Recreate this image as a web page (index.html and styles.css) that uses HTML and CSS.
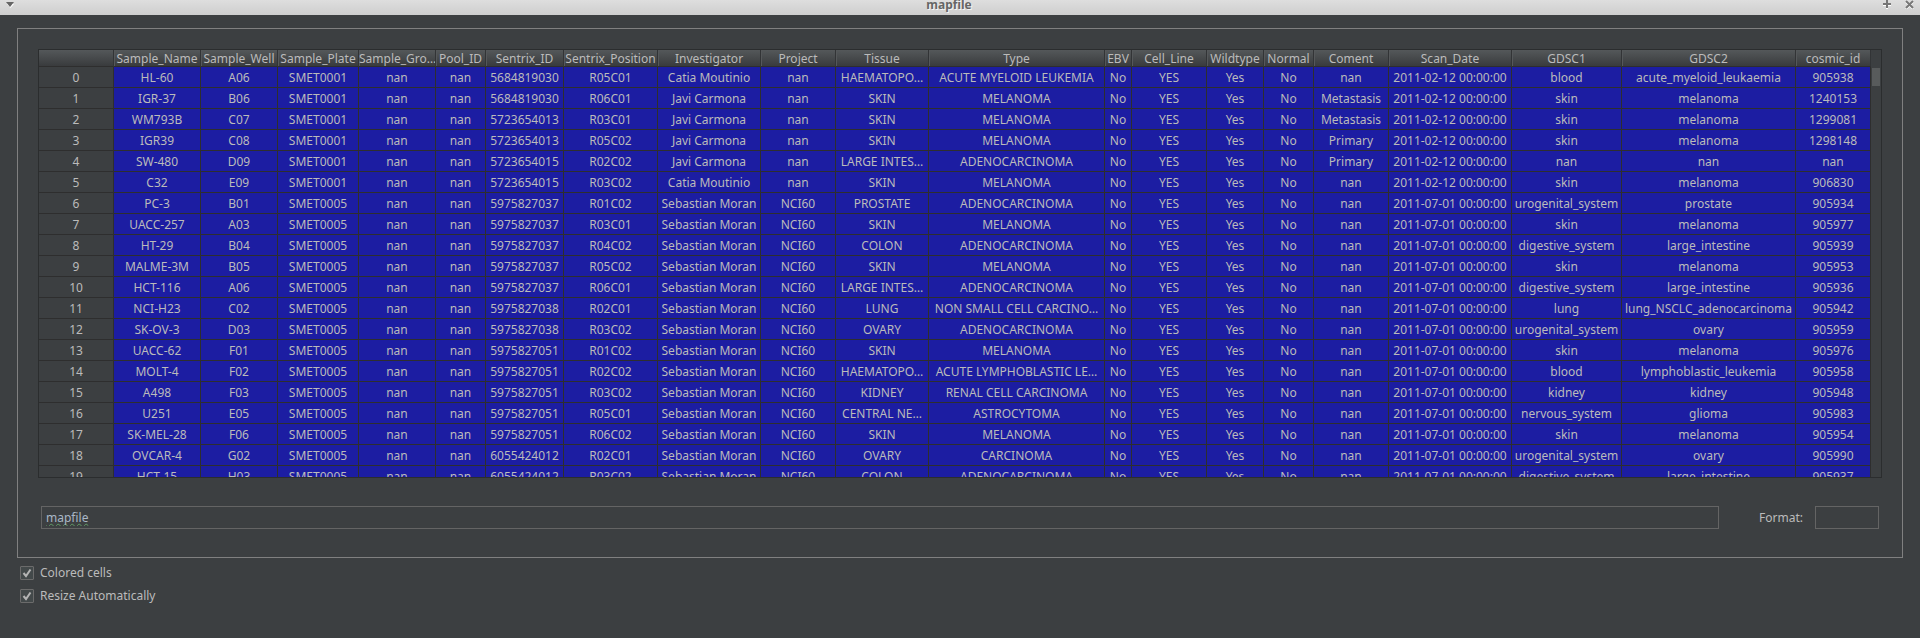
FILE: index.html
```html
<!DOCTYPE html>
<html lang="en">
<head>
<meta charset="utf-8">
<title>mapfile</title>
<link rel="stylesheet" href="styles.css">
</head>
<body>
<header class="titlebar">
  <button class="title-button" type="button" aria-label="Window menu">
    <svg width="8" height="6" viewBox="0 0 8 6"><path d="M1 2h7L4.500 6z" fill="#fff"/><path d="M0 0h8L4 5z" fill="#666"/></svg>
  </button>
  <h1 class="title">mapfile</h1>
  <div class="title-actions">
    <button class="title-button" type="button" aria-label="Maximize">
      <svg width="8" height="9" viewBox="0 0 8 9"><path d="M0 5h8M4 1v8" stroke="#fff" stroke-width="2"/><path d="M0 4h8M4 0v8" stroke="#777" stroke-width="2"/></svg>
    </button>
    <button class="title-button" type="button" aria-label="Close">
      <svg width="9" height="9" viewBox="0 0 9 9"><path d="M1 2l7 7M8 2l-7 7" stroke="#fff" stroke-width="2"/><path d="M1 1l7 7M8 1l-7 7" stroke="#777" stroke-width="2"/></svg>
    </button>
  </div>
</header>

<main class="content">
  <section class="panel">
    <div class="grid-view">
      <div class="grid-rows">
        <table class="grid">
          <colgroup id="columns"></colgroup>
          <thead><tr id="headings"></tr></thead>
          <tbody id="rows"></tbody>
        </table>
      </div>
      <div class="scrollbar"><div class="thumb"></div></div>
    </div>
    <div class="fields">
      <input class="field expression" type="text" value="mapfile" aria-label="Expression">
      <label class="format-label" for="format">Format:</label>
      <input class="field format" id="format" type="text">
    </div>
  </section>
  <div class="options">
    <label class="option"><input class="check" type="checkbox" checked>Colored cells</label>
    <label class="option"><input class="check" type="checkbox" checked>Resize Automatically</label>
  </div>
</main>
<script src="script.js"></script>
</body>
</html>
```

FILE: styles.css
```css
* {
  box-sizing: border-box;
}

body {
  margin: 0;
  min-height: 100vh;
  display: flex;
  flex-direction: column;
  background: #3c3f41;
  color: #bbbbbb;
  font: 12px/16px "Noto Sans", "Open Sans", sans-serif;
}

.titlebar {
  display: grid;
  grid-template-columns: 1fr auto 1fr;
  align-items: start;
  height: 15px;
  padding: 0 6px;
  background: linear-gradient(#dedede, #cecece);
}

.title {
  margin: 0;
  padding-right: 22px;
  font-size: 12px;
  line-height: 9px;
  color: #666666;
  text-shadow: 1px 1px 0 #f4f4f4;
}

.title-button {
  display: block;
  justify-self: start;
  padding: 0;
  border: 0;
  background: none;
}

.title-button svg {
  display: block;
}

.titlebar > .title-button {
  padding-top: 2px;
}

.title-actions {
  display: flex;
  gap: 14px;
  justify-self: end;
}

.content {
  flex: 1;
  display: flex;
  flex-direction: column;
  padding: 13px 17px 34px;
}

.panel {
  flex: 1;
  display: flex;
  flex-direction: column;
  padding: 20px;
  border: 1px solid #808080;
}

.grid-view {
  flex: 1 1 0;
  min-height: 200px;
  display: flex;
  border: 1px solid #2b2d2e;
}

.grid-rows {
  flex: 1;
  height: 100%;
  min-width: 0;
  contain: size;
  overflow: hidden;
}

.grid {
  width: 100%;
  table-layout: fixed;
  border-collapse: separate;
  border-spacing: 0;
}

.grid th,
.grid td {
  height: 21px;
  padding: 2px 0 0;
  border: 0 solid #2e2e2e;
  border-width: 0 1px 1px 0;
  font-weight: normal;
  line-height: 18px;
  text-align: center;
  white-space: nowrap;
  overflow: hidden;
}

.grid thead th {
  height: 17px;
  border-right-color: #323436;
  background: linear-gradient(#54585a, #393b3d);
  line-height: 14px;
}

.grid thead th + th {
  box-shadow: inset 1px 0 0 #55585a;
}

.grid td {
  background: #1c1da2;
}

.scrollbar {
  width: 10px;
  padding: 18px 1px 0;
}

.thumb {
  height: 18px;
  background: #585b5c;
}

.fields {
  display: flex;
  align-items: center;
  margin: 28px 3px 8px;
}

.field {
  height: 23px;
  padding: 0 4px;
  border: 1px solid #646464;
  background: #3c3f41;
  color: #a9b7c6;
  font: inherit;
  line-height: 21px;
  outline: 0;
}

.expression {
  flex: 1;
  min-width: 0;
  text-decoration: underline wavy #5f9a65 1px;
  text-underline-offset: 1px;
  text-decoration-skip-ink: none;
}

.format-label {
  padding: 0 12px 0 40px;
}

.format {
  width: 64px;
}

.options {
  display: flex;
  flex-direction: column;
  align-items: flex-start;
  gap: 7px;
  padding: 7px 3px 0;
}

.option {
  display: flex;
  align-items: center;
  gap: 6px;
}

.check {
  appearance: none;
  width: 14px;
  height: 14px;
  margin: 0;
  border: 1px solid #6b6b6b;
  border-radius: 1px;
  background: #43494a;
}

.check:checked {
  background: #43494a url("data:image/svg+xml,%3Csvg xmlns='http://www.w3.org/2000/svg' viewBox='0 0 12 12'%3E%3Cpath d='M2.500 6L5 9L9.500 2.500' fill='none' stroke='%23b4b4b4' stroke-width='2'/%3E%3C/svg%3E") center / 12px 12px no-repeat;
}
```

FILE: script.js
```js
const columns = [
  ["", 75], ["Sample_Name", 87], ["Sample_Well", 77], ["Sample_Plate", 81],
  ["Sample_Gro…", 77], ["Pool_ID", 50], ["Sentrix_ID", 78], ["Sentrix_Position", 94],
  ["Investigator", 103], ["Project", 75], ["Tissue", 93], ["Type", 176],
  ["EBV", 27], ["Cell_Line", 75], ["Wildtype", 57], ["Normal", 50],
  ["Coment", 75], ["Scan_Date", 123], ["GDSC1", 110], ["GDSC2", 174], ["cosmic_id", 75]
];

// name, well, sentrix id, position, investigator, tissue, type, comment, gdsc1, gdsc2, cosmic id
const samples = `
HL-60|A06|5684819030|R05C01|Catia Moutinio|HAEMATOPO…|ACUTE MYELOID LEUKEMIA|nan|blood|acute_myeloid_leukaemia|905938
IGR-37|B06|5684819030|R06C01|Javi Carmona|SKIN|MELANOMA|Metastasis|skin|melanoma|1240153
WM793B|C07|5723654013|R03C01|Javi Carmona|SKIN|MELANOMA|Metastasis|skin|melanoma|1299081
IGR39|C08|5723654013|R05C02|Javi Carmona|SKIN|MELANOMA|Primary|skin|melanoma|1298148
SW-480|D09|5723654015|R02C02|Javi Carmona|LARGE INTES…|ADENOCARCINOMA|Primary|nan|nan|nan
C32|E09|5723654015|R03C02|Catia Moutinio|SKIN|MELANOMA|nan|skin|melanoma|906830
PC-3|B01|5975827037|R01C02|Sebastian Moran|PROSTATE|ADENOCARCINOMA|nan|urogenital_system|prostate|905934
UACC-257|A03|5975827037|R03C01|Sebastian Moran|SKIN|MELANOMA|nan|skin|melanoma|905977
HT-29|B04|5975827037|R04C02|Sebastian Moran|COLON|ADENOCARCINOMA|nan|digestive_system|large_intestine|905939
MALME-3M|B05|5975827037|R05C02|Sebastian Moran|SKIN|MELANOMA|nan|skin|melanoma|905953
HCT-116|A06|5975827037|R06C01|Sebastian Moran|LARGE INTES…|ADENOCARCINOMA|nan|digestive_system|large_intestine|905936
NCI-H23|C02|5975827038|R02C01|Sebastian Moran|LUNG|NON SMALL CELL CARCINO…|nan|lung|lung_NSCLC_adenocarcinoma|905942
SK-OV-3|D03|5975827038|R03C02|Sebastian Moran|OVARY|ADENOCARCINOMA|nan|urogenital_system|ovary|905959
UACC-62|F01|5975827051|R01C02|Sebastian Moran|SKIN|MELANOMA|nan|skin|melanoma|905976
MOLT-4|F02|5975827051|R02C02|Sebastian Moran|HAEMATOPO…|ACUTE LYMPHOBLASTIC LE…|nan|blood|lymphoblastic_leukemia|905958
A498|F03|5975827051|R03C02|Sebastian Moran|KIDNEY|RENAL CELL CARCINOMA|nan|kidney|kidney|905948
U251|E05|5975827051|R05C01|Sebastian Moran|CENTRAL NE…|ASTROCYTOMA|nan|nervous_system|glioma|905983
SK-MEL-28|F06|5975827051|R06C02|Sebastian Moran|SKIN|MELANOMA|nan|skin|melanoma|905954
OVCAR-4|G02|6055424012|R02C01|Sebastian Moran|OVARY|CARCINOMA|nan|urogenital_system|ovary|905990
HCT-15|H03|6055424012|R03C02|Sebastian Moran|COLON|ADENOCARCINOMA|nan|digestive_system|large_intestine|905937
`.trim().split("\n").map(line => line.split("|"));

function cell(tag, text, scope) {
  const element = document.createElement(tag);
  element.textContent = text;
  if (scope) element.scope = scope;
  return element;
}

for (const [name, width] of columns) {
  const col = document.createElement("col");
  col.style.width = width + "px";
  document.getElementById("columns").append(col);
  document.getElementById("headings").append(cell("th", name, "col"));
}

samples.forEach((sample, index) => {
  const [name, well, id, position, person, tissue, type, comment, gdsc1, gdsc2, cosmic] = sample;
  const firstBatch = index < 6;
  const row = document.createElement("tr");
  row.append(cell("th", index, "row"));
  const values = [
    name, well, firstBatch ? "SMET0001" : "SMET0005", "nan", "nan", id, position, person,
    firstBatch ? "nan" : "NCI60", tissue, type, "No", "YES", "Yes", "No", comment,
    firstBatch ? "2011-02-12 00:00:00" : "2011-07-01 00:00:00", gdsc1, gdsc2, cosmic
  ];
  for (const value of values) row.append(cell("td", value));
  document.getElementById("rows").append(row);
});
```
